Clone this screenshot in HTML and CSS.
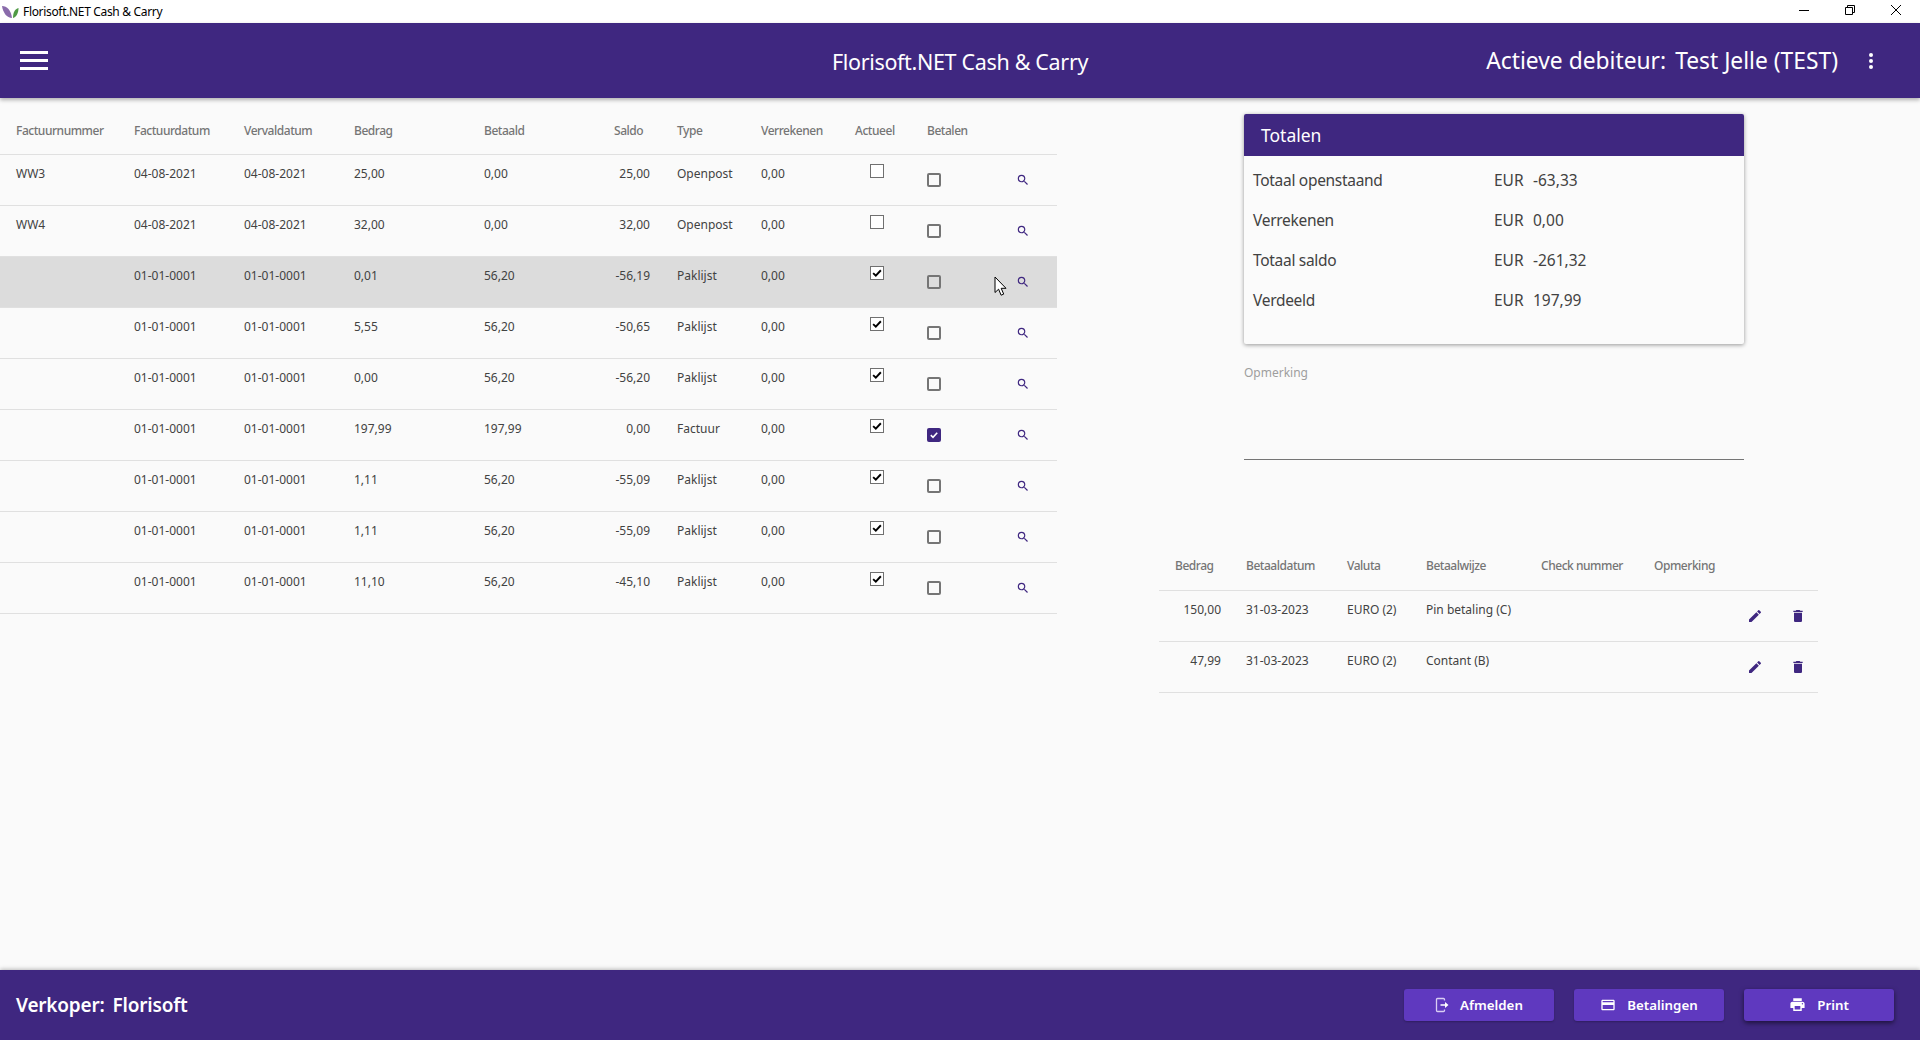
FILE: index.html
```html
<!DOCTYPE html>
<html lang="nl">
<head>
<meta charset="utf-8">
<title>Florisoft.NET Cash &amp; Carry</title>
<link rel="stylesheet" href="styles.css">
</head>
<body>
<svg class="defs" width="0" height="0" aria-hidden="true">
  <symbol id="i-search" viewBox="0 0 24 24"><path d="M15.5 14h-.79l-.28-.27A6.47 6.47 0 0 0 16 9.5 6.5 6.5 0 1 0 9.5 16c1.61 0 3.09-.59 4.23-1.57l.27.28v.79l5 4.99L20.49 19l-4.99-5zm-6 0C7.01 14 5 11.99 5 9.5S7.01 5 9.5 5 14 7.01 14 9.5 11.99 14 9.5 14z"/></symbol>
  <symbol id="i-edit" viewBox="0 0 24 24"><path d="M3 17.25V21h3.75L17.81 9.94l-3.75-3.75L3 17.25zM20.71 7.04a1 1 0 0 0 0-1.41l-2.34-2.34a1 1 0 0 0-1.41 0l-1.83 1.83 3.75 3.75 1.83-1.83z"/></symbol>
  <symbol id="i-trash" viewBox="0 0 24 24"><path d="M6 19c0 1.1.9 2 2 2h8c1.1 0 2-.9 2-2V7H6v12zM19 4h-3.5l-1-1h-5l-1 1H5v2h14V4z"/></symbol>
  <symbol id="i-tick" viewBox="0 0 14 14"><path d="M2.5 7.2 5.6 10.2 11.5 3.8" fill="none" stroke="currentColor" stroke-width="2.2"/></symbol>
</svg>
<div class="app">
  <div class="titlebar">
    <svg class="logo" viewBox="0 0 17 14" width="17" height="14"><path d="M0 1c5 0 9 4 10 12C5 13 1 8 0 1z" fill="#8a6bab"/><path d="M16.500 3c-3.500 1-5.500 4-5.500 10 3.500-1 5.500-5 5.500-10z" fill="#4f9a45"/></svg>
    <span class="titlebar-text">Florisoft.NET Cash &amp; Carry</span>
    <div class="winctl">
      <svg width="46" height="20" viewBox="0 0 46 20"><path d="M18 10.500h10" stroke="#000" fill="none"/></svg>
      <svg width="46" height="20" viewBox="0 0 46 20"><path d="M18.500 7.500h7v7h-7zM20.500 7.500v-2h7v7h-2" stroke="#000" fill="none"/></svg>
      <svg width="46" height="20" viewBox="0 0 46 20"><path d="M18 5l10 10M28 5 18 15" stroke="#000" fill="none"/></svg>
    </div>
  </div>
  <header class="topbar">
    <button class="menu-btn" aria-label="Menu"><span></span><span></span><span></span></button>
    <div class="app-title">Florisoft.NET Cash &amp; Carry</div>
    <div class="debtor"><span>Actieve debiteur:</span><span>Test Jelle (TEST)</span></div>
    <div class="more"><i></i><i></i><i></i></div>
  </header>
  <main class="content">
    <section class="invoices">
      <div class="irow ihead"><div>Factuurnummer</div><div>Factuurdatum</div><div>Vervaldatum</div><div>Bedrag</div><div>Betaald</div><div>Saldo</div><div>Type</div><div>Verrekenen</div><div>Actueel</div><div>Betalen</div><div></div></div>
      <div class="irow"><div>WW3</div><div>04-08-2021</div><div>04-08-2021</div><div>25,00</div><div>0,00</div><div class="num">25,00</div><div>Openpost</div><div>0,00</div><div><span class="cb"></span></div><div><span class="mcb"></span></div><div class="act"><svg class="ic-s"><use href="#i-search"/></svg></div></div>
      <div class="irow"><div>WW4</div><div>04-08-2021</div><div>04-08-2021</div><div>32,00</div><div>0,00</div><div class="num">32,00</div><div>Openpost</div><div>0,00</div><div><span class="cb"></span></div><div><span class="mcb"></span></div><div class="act"><svg class="ic-s"><use href="#i-search"/></svg></div></div>
      <div class="irow selected"><div></div><div>01-01-0001</div><div>01-01-0001</div><div>0,01</div><div>56,20</div><div class="num">-56,19</div><div>Paklijst</div><div>0,00</div><div><span class="cb"><svg><use href="#i-tick"/></svg></span></div><div><span class="mcb"></span></div><div class="act"><svg class="ic-s"><use href="#i-search"/></svg></div></div>
      <div class="irow"><div></div><div>01-01-0001</div><div>01-01-0001</div><div>5,55</div><div>56,20</div><div class="num">-50,65</div><div>Paklijst</div><div>0,00</div><div><span class="cb"><svg><use href="#i-tick"/></svg></span></div><div><span class="mcb"></span></div><div class="act"><svg class="ic-s"><use href="#i-search"/></svg></div></div>
      <div class="irow"><div></div><div>01-01-0001</div><div>01-01-0001</div><div>0,00</div><div>56,20</div><div class="num">-56,20</div><div>Paklijst</div><div>0,00</div><div><span class="cb"><svg><use href="#i-tick"/></svg></span></div><div><span class="mcb"></span></div><div class="act"><svg class="ic-s"><use href="#i-search"/></svg></div></div>
      <div class="irow"><div></div><div>01-01-0001</div><div>01-01-0001</div><div>197,99</div><div>197,99</div><div class="num">0,00</div><div>Factuur</div><div>0,00</div><div><span class="cb"><svg><use href="#i-tick"/></svg></span></div><div><span class="mcb on"><svg><use href="#i-tick"/></svg></span></div><div class="act"><svg class="ic-s"><use href="#i-search"/></svg></div></div>
      <div class="irow"><div></div><div>01-01-0001</div><div>01-01-0001</div><div>1,11</div><div>56,20</div><div class="num">-55,09</div><div>Paklijst</div><div>0,00</div><div><span class="cb"><svg><use href="#i-tick"/></svg></span></div><div><span class="mcb"></span></div><div class="act"><svg class="ic-s"><use href="#i-search"/></svg></div></div>
      <div class="irow"><div></div><div>01-01-0001</div><div>01-01-0001</div><div>1,11</div><div>56,20</div><div class="num">-55,09</div><div>Paklijst</div><div>0,00</div><div><span class="cb"><svg><use href="#i-tick"/></svg></span></div><div><span class="mcb"></span></div><div class="act"><svg class="ic-s"><use href="#i-search"/></svg></div></div>
      <div class="irow"><div></div><div>01-01-0001</div><div>01-01-0001</div><div>11,10</div><div>56,20</div><div class="num">-45,10</div><div>Paklijst</div><div>0,00</div><div><span class="cb"><svg><use href="#i-tick"/></svg></span></div><div><span class="mcb"></span></div><div class="act"><svg class="ic-s"><use href="#i-search"/></svg></div></div>
    </section>
    <section class="side">
      <div class="card">
        <div class="card-head">Totalen</div>
        <div class="card-body">
          <div class="trow"><span class="tlabel">Totaal openstaand</span><span>EUR</span><span>-63,33</span></div>
          <div class="trow"><span class="tlabel">Verrekenen</span><span>EUR</span><span>0,00</span></div>
          <div class="trow"><span class="tlabel">Totaal saldo</span><span>EUR</span><span>-261,32</span></div>
          <div class="trow"><span class="tlabel">Verdeeld</span><span>EUR</span><span>197,99</span></div>
        </div>
      </div>
      <div class="field"><label>Opmerking</label></div>
      <div class="payments">
        <div class="prow phead"><div>Bedrag</div><div>Betaaldatum</div><div>Valuta</div><div>Betaalwijze</div><div>Check nummer</div><div>Opmerking</div><div></div><div></div></div>
        <div class="prow"><div class="num">150,00</div><div>31-03-2023</div><div>EURO (2)</div><div>Pin betaling (C)</div><div></div><div></div><div class="act"><svg class="ic-m"><use href="#i-edit"/></svg></div><div class="act"><svg class="ic-m"><use href="#i-trash"/></svg></div></div>
        <div class="prow"><div class="num">47,99</div><div>31-03-2023</div><div>EURO (2)</div><div>Contant (B)</div><div></div><div></div><div class="act"><svg class="ic-m"><use href="#i-edit"/></svg></div><div class="act"><svg class="ic-m"><use href="#i-trash"/></svg></div></div>
      </div>
    </section>
    <svg class="cursor" width="14" height="21" viewBox="0 0 14 21"><path d="M1 1v15.500l3.600-3.300 2.500 6 2.600-1.100-2.500-5.800H12z" fill="#fff" stroke="#000" stroke-width="1"/></svg>
  </main>
  <footer class="bottombar">
    <div class="seller"><span>Verkoper:</span><span>Florisoft</span></div>
    <div class="actions">
      <button class="btn"><svg viewBox="0 0 14 16" width="14" height="16"><path d="M9.500 3.500V2.500a1 1 0 0 0-1-1H2.500a1 1 0 0 0-1 1v11a1 1 0 0 0 1 1h6a1 1 0 0 0 1-1v-1" fill="none" stroke="#d9cdf3" stroke-width="1.300"/><path d="M5.500 7.300h4.500V5l3.500 3-3.500 3V8.700H5.500z"/></svg>Afmelden</button>
      <button class="btn"><svg viewBox="0 0 24 24" width="16" height="16"><path d="M20 4H4c-1.110 0-1.990.890-1.990 2L2 18c0 1.110.890 2 2 2h16c1.110 0 2-.890 2-2V6c0-1.110-.890-2-2-2zm0 14H4v-6h16v6zm0-10H4V6h16v2z"/></svg>Betalingen</button>
      <button class="btn raised"><svg viewBox="0 0 24 24" width="17" height="17"><path d="M19 8H5c-1.660 0-3 1.340-3 3v6h4v4h12v-4h4v-6c0-1.660-1.340-3-3-3zm-3 11H8v-5h8v5zm3-7c-.550 0-1-.450-1-1s.450-1 1-1 1 .450 1 1-.450 1-1 1zm-1-9H6v4h12V3z"/></svg>Print</button>
    </div>
  </footer>
</div>
</body>
</html>
```
FILE: styles.css
```css
* { box-sizing: border-box; }
html, body { margin: 0; height: 100%; }
body { font-family: "Noto Sans", "Open Sans", sans-serif; background: #fafafa; color: #424242; overflow: hidden; }
.defs { position: absolute; }
.app { display: flex; flex-direction: column; height: 100vh; }

.titlebar { height: 23px; background: #fff; display: flex; align-items: center; padding-left: 2px; color: #000; font-size: 12px; }
.logo { margin-right: 4px; }
.titlebar-text { letter-spacing: -.33px; }
.winctl { margin-left: auto; display: flex; margin-right: 1px; align-self: flex-start; }
.winctl svg { display: block; }

.topbar { height: 75px; background: #3f2780; color: #fff; display: grid; grid-template-columns: 1fr auto 1fr; align-items: center; position: relative; box-shadow: 0 2px 4px rgba(0,0,0,.3); z-index: 2; }
.menu-btn { width: 28px; height: 19px; background: none; border: 0; padding: 0; display: flex; flex-direction: column; justify-content: space-between; justify-self: start; margin-left: 20px; }
.menu-btn span { display: block; height: 3px; background: #fff; }
.app-title { font-size: 21.500px; line-height: 30px; letter-spacing: -.33px; margin-top: 2px; }
.debtor { justify-self: end; display: flex; gap: 9px; font-size: 22.800px; line-height: 30px; margin: 1px 82px 0 0; }
.more { position: absolute; right: 47px; top: 30px; display: flex; flex-direction: column; gap: 2px; }
.more i { display: block; width: 4px; height: 4px; border-radius: 50%; background: #fff; }

.content { flex: 1; display: flex; position: relative; min-height: 0; }
.invoices { width: 1057px; flex: none; font-size: 12px; }
.irow { display: grid; grid-template-columns: 118px 110px 110px 130px 130px 63px 84px 94px 72px 73px 57px; padding-left: 16px; height: 51px; border-bottom: 1px solid #e0e0e0; padding-top: 10px; line-height: 18px; }
.irow.ihead { height: 57px; padding-top: 24px; color: #757575; font-weight: 500; letter-spacing: -.46px; }
.irow.selected { background: #dcdcdc; }
.irow .num { text-align: right; padding-right: 27px; }
.act { display: flex; justify-content: flex-start; }
.irow .act { padding: 8px 0 0 16px; }
.ic-s { width: 14px; height: 14px; fill: #3f2780; display: block; }
.ic-m { width: 16px; height: 16px; fill: #3f2780; display: block; }

.cb { display: block; width: 14px; height: 14px; margin: -1px 0 0 15px; background: #fff; border: 1px solid #707070; color: #000; }
.cb svg { display: block; width: 12px; height: 12px; }
.mcb { display: block; width: 14px; height: 14px; margin-top: 8px; border: 2px solid #757575; border-radius: 2px; color: #fff; }
.mcb.on { background: #3f2780; border-color: #3f2780; }
.mcb svg { display: block; width: 10px; height: 10px; }

.side { flex: 1; padding-left: 102px; min-width: 0; }
.card { width: 500px; height: 230px; margin: 16px 0 0 85px; background: #fbfbfb; border-radius: 2px; box-shadow: 0 1px 4px rgba(0,0,0,.4); overflow: hidden; }
.card-head { height: 42px; background: #3f2780; color: #fff; font-size: 17.500px; line-height: 42px; padding-left: 17px; }
.card-body { padding: 4px 0 0 9px; }
.trow { display: grid; grid-template-columns: 241px 39px 1fr; height: 40px; line-height: 40px; font-size: 15.500px; }
.tlabel { letter-spacing: -.3px; }
.field { width: 500px; height: 96px; margin: 20px 0 0 85px; border-bottom: 1px solid #757575; font-size: 12px; color: #9e9e9e; }
.field label { line-height: 18px; }
.payments { width: 659px; margin-top: 97px; font-size: 12px; }
.prow { display: grid; grid-template-columns: 87px 101px 79px 115px 113px 93px 43px 1fr; height: 51px; border-bottom: 1px solid #e0e0e0; padding-top: 10px; line-height: 18px; }
.prow.phead { color: #757575; font-weight: 500; height: 34px; padding-top: 0; padding-left: 16px; grid-template-columns: 71px 101px 79px 115px 113px 93px 43px 1fr; letter-spacing: -.46px; }
.prow .num { text-align: right; padding-right: 25px; }
.prow .act { padding-top: 7px; }

.cursor { position: absolute; left: 994px; top: 178px; z-index: 3; }

.bottombar { height: 70px; background: #3f2780; color: #fff; display: flex; align-items: center; justify-content: space-between; padding: 0 26px 0 16px; box-shadow: 0 -1px 4px rgba(0,0,0,.25); }
.seller { display: flex; gap: 8px; font-size: 19px; font-weight: 600; letter-spacing: -.2px; }
.actions { display: flex; gap: 20px; }
.btn { width: 150px; height: 32px; display: flex; align-items: center; justify-content: center; gap: 11px; padding: 0 0 1px; background: #5f39bf; color: #fff; border: 0; border-radius: 3px; font: 600 13.300px "Noto Sans", sans-serif; box-shadow: 0 1px 2px rgba(0,0,0,.25); }
.btn svg { fill: currentColor; }
.btn.raised { box-shadow: 0 2px 5px rgba(0,0,0,.55); }
```
